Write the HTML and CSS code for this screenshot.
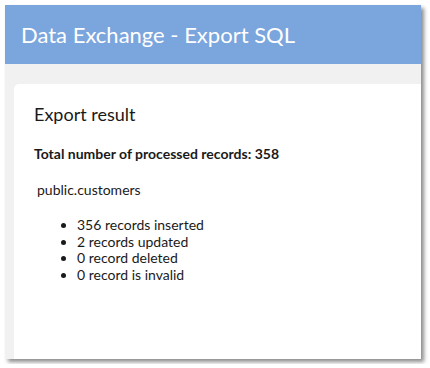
FILE: index.html
```html
<!DOCTYPE html>
<html lang="en">
<head>
    <meta charset="UTF-8">
    <title>Data Exchange - Export SQL</title>
    <link rel="stylesheet" href="styles.css">
</head>
<body>
    <div class="window">
        <div class="header">Data Exchange - Export SQL</div>
        <div class="content">
            <div class="card">
                <h2>Export result</h2>
                <p class="total">Total number of processed records: 358</p>
                <p class="table-name">public.customers</p>
                <ul class="stats">
                    <li>356 records inserted</li>
                    <li>2 records updated</li>
                    <li>0 record deleted</li>
                    <li>0 record is invalid</li>
                </ul>
            </div>
        </div>
    </div>
</body>
</html>
```

FILE: styles.css
```css
body {
    margin: 0;
    padding: 5px;
    background-color: white;
    font-family: Lato, "Open Sans", sans-serif;
}
.window {
    width: 416px;
    height: 354px;
    display: flex;
    flex-direction: column;
    background-color: #f1f1f1;
    box-shadow: 3px 3px 4px rgba(0,0,0,0.45);
    overflow: hidden;
}
.header {
    height: 59px;
    display: flex;
    align-items: center;
    padding-left: 16px;
    background-color: #7ba5dd;
    color: white;
    font-size: 22px;
}
.content {
    flex: 1;
    display: flex;
    padding: 20px 0 0 9px;
}
.card {
    flex: 1;
    background-color: white;
    border-radius: 5px 0 0 0;
    padding: 19px 20px 0 20px;
    color: #1a1a1a;
}
h2 {
    margin: 0;
    font-size: 18px;
    line-height: 22px;
    font-weight: normal;
}
.total {
    margin: 20px 0 0 0;
    font-size: 14px;
    line-height: 17px;
    font-weight: bold;
}
.table-name {
    margin: 19px 0 0 3px;
    font-size: 14px;
    line-height: 17px;
}
.stats {
    margin: 19px 0 0 0;
    padding-left: 43px;
    font-size: 14px;
    line-height: 16.7px;
}
```
